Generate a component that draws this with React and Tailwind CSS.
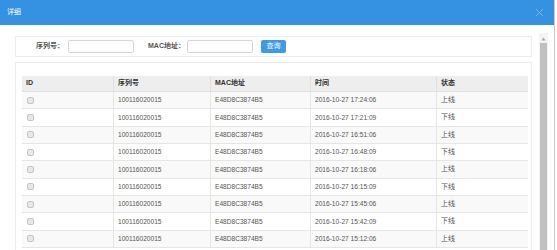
import React from "react";

const times = [
  "2016-10-27 17:24:06",
  "2016-10-27 17:21:09",
  "2016-10-27 16:51:06",
  "2016-10-27 16:48:09",
  "2016-10-27 16:18:06",
  "2016-10-27 16:15:09",
  "2016-10-27 15:45:06",
  "2016-10-27 15:42:09",
  "2016-10-27 15:12:06",
];

function Row({ time, idx }) {
  const up = idx % 2 === 0;
  return (
    <div
      className={`flex h-[17.33px] items-center border-b border-[#e6e6e6] ${
        up ? "bg-[#f9f9f9]" : "bg-white"
      }`}
    >
      <div className="w-[92px] h-full flex items-center pl-[5px] border-r border-[#e6e6e6]">
        <span className="block w-[7px] h-[7px] rounded-[2px] border border-[#c4c4c4] bg-[#e8e8e8]" />
      </div>
      <div className="w-[97px] h-full flex items-center pl-[4px] border-r border-[#e6e6e6]">100116020015</div>
      <div className="w-[100px] h-full flex items-center pl-[4px] border-r border-[#e6e6e6]">E48D8C3874B5</div>
      <div className="w-[126px] h-full flex items-center pl-[4px] border-r border-[#e6e6e6]">{time}</div>
      <div className="w-[91px] h-full flex items-center pl-[4px] text-[7px]">{up ? "上线" : "下线"}</div>
    </div>
  );
}

export default function App() {
  const font = "font-['Liberation_Sans','Noto_Sans_CJK_SC',sans-serif]";
  return (
    <div className={`w-[557px] h-[250px] bg-white overflow-hidden relative ${font} text-[6.6px] text-[#555]`}>
      <div className="flex">
        <div className="flex-1">
          <div className="h-[25px] bg-[#3592e2] flex items-center justify-between pl-[7px] pr-[10px]">
            <span className="text-white text-[7px]">详细</span>
            <svg width="9" height="9" viewBox="0 0 9 9">
              <path d="M1 1L8 8M8 1L1 8" stroke="#82b6e8" strokeWidth="1" />
            </svg>
          </div>
          <div className="flex">
            <div className="w-[532px] pl-[15px]">
              <div className="mt-[11px] h-[21px] border border-[#ececec] flex items-center text-[7px]">
                <span className="ml-[20px] w-[31px] font-bold text-[#555]">序列号：</span>
                <span className="ml-[1px] w-[66px] h-[13px] border border-[#d6d6d6] rounded-[2px] bg-white" />
                <span className="ml-[14px] w-[39px] font-bold text-[#555]">MAC地址：</span>
                <span className="w-[66px] h-[13px] border border-[#d6d6d6] rounded-[2px] bg-white" />
                <span className="ml-[8px] w-[25px] h-[13px] rounded-[2px] bg-[#3d9ae8] text-white flex items-center justify-center">
                  查询
                </span>
              </div>
              <div className="mt-[5px] h-[200px] border border-[#ececec] pl-[6px] pt-[13px]">
                <div className="w-[506px]">
                  <div className="flex h-[16px] items-center bg-[#eeeeee] border-b border-[#e0e0e0] font-bold text-[#333] text-[7px]">
                    <div className="w-[92px] h-full flex items-center pl-[4px] border-r border-[#e0e0e0]">ID</div>
                    <div className="w-[97px] h-full flex items-center pl-[4px] border-r border-[#e0e0e0]">序列号</div>
                    <div className="w-[100px] h-full flex items-center pl-[4px] border-r border-[#e0e0e0]">MAC地址</div>
                    <div className="w-[126px] h-full flex items-center pl-[4px] border-r border-[#e0e0e0]">时间</div>
                    <div className="w-[91px] h-full flex items-center pl-[4px]">状态</div>
                  </div>
                  {times.map((t, i) => (
                    <Row key={i} time={t} idx={i} />
                  ))}
                </div>
              </div>
            </div>
            <div className="ml-[7px] mt-[8px] w-[9px] flex flex-col items-center bg-[#f4f4f4] h-[230px]">
              <svg width="5" height="4" viewBox="0 0 5 4" className="mt-[4px]">
                <path d="M2.5 0.5L4.5 3.5H0.5Z" fill="#a3a3a3" />
              </svg>
              <div className="mt-[2px] w-[7px] flex-1 bg-[#c1c1c1]" />
            </div>
          </div>
        </div>
        <div className="w-[1px] h-[250px] bg-[#c8c8c8]" />
        <div className="w-[2px] h-[250px] bg-white" />
      </div>
    </div>
  );
}
